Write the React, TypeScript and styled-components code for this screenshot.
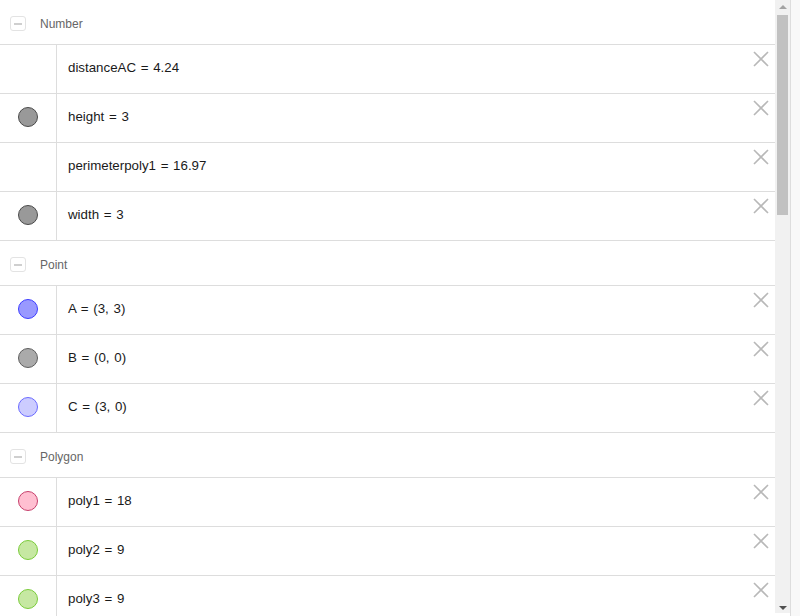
import React, { FunctionComponent } from "react";
import styled, { createGlobalStyle } from "styled-components";

/* Global */
const GlobalStyle = createGlobalStyle`
  html, body {
    margin: 0;
    padding: 0;
    background: #ffffff;
    overflow: hidden;
  }
  body {
    font-family: "Liberation Sans", Arial, sans-serif;
  }
`;

/* Styles */
const Page = styled.div`
  display: flex;
  width: 800px;
  height: 616px;
  background: #ffffff;
`;

const AlgebraList = styled.div`
  flex: 1;
  display: flex;
  flex-direction: column;
  overflow: hidden;
`;

const SectionHeader = styled.div`
  flex: none;
  height: 41px;
  padding-top: 3px;
  display: flex;
  align-items: center;
  padding-left: 10px;
  border-bottom: 1px solid #dddddd;
`;

const CollapseBox = styled.div`
  width: 14px;
  height: 13px;
  border: 1px solid #e3e3e3;
  border-radius: 3px;
  display: flex;
  justify-content: center;
  align-items: center;

  &::after {
    content: "";
    width: 8px;
    height: 2px;
    background: #cfcfcf;
  }
`;

const SectionTitle = styled.span`
  margin-left: 14px;
  font-size: 12px;
  color: #666666;
`;

const Row = styled.div`
  flex: none;
  height: 48px;
  display: flex;
  border-bottom: 1px solid #dddddd;
`;

const MarbleCell = styled.div`
  width: 56px;
  flex: none;
  border-right: 1px solid #dddddd;
  display: flex;
  justify-content: center;
  align-items: center;
  padding-bottom: 2px;
`;

const Marble = styled.div<{ $fill: string; $stroke: string }>`
  width: 18px;
  height: 18px;
  border-radius: 50%;
  background: ${(p) => p.$fill};
  border: 1px solid ${(p) => p.$stroke};
`;

const Definition = styled.div`
  flex: 1;
  display: flex;
  align-items: center;
  padding-left: 11px;
  padding-bottom: 4px;
  font-size: 13.3px;
  color: #1a1a1a;
  word-spacing: 1px;
`;

const DeleteButton = styled.div`
  align-self: flex-start;
  margin-top: 6px;
  margin-right: 6px;
  width: 16px;
  height: 16px;
  cursor: pointer;
`;

const Scrollbar = styled.div`
  width: 15px;
  height: 613px;
  flex: none;
  background: #f1f1f1;
  display: flex;
  flex-direction: column;
  align-items: center;
`;

const ArrowButton = styled.div<{ $down?: boolean }>`
  width: 15px;
  height: 15px;
  flex: none;
  display: flex;
  justify-content: center;
  align-items: center;
  margin-top: ${(p) => (p.$down ? "auto" : "0")};

  &::after {
    content: "";
    width: 0;
    height: 0;
    border-left: 4px solid transparent;
    border-right: 4px solid transparent;
    ${(p) =>
      p.$down
        ? "border-top: 4px solid #505050; margin-top: 4px;"
        : "border-bottom: 4px solid #a3a3a3; margin-bottom: 1px;"}
  }
`;

const Thumb = styled.div`
  width: 11px;
  height: 200px;
  background: #c1c1c1;
`;

const WindowEdge = styled.div`
  width: 9px;
  flex: none;
  border-left: 1px solid #dddddd;
  background: #f8f8f8;
`;

/* Data */

interface Item {
  text: string;
  marble?: { fill: string; stroke: string };
}

interface Section {
  title: string;
  items: Item[];
}

const gray = { fill: "#999999", stroke: "#4a4a4a" };
const green = { fill: "#c6e8a2", stroke: "#7acc3a" };

const sections: Section[] = [
  {
    title: "Number",
    items: [
      { text: "distanceAC = 4.24" },
      { text: "height = 3", marble: gray },
      { text: "perimeterpoly1 = 16.97" },
      { text: "width = 3", marble: gray },
    ],
  },
  {
    title: "Point",
    items: [
      { text: "A = (3, 3)", marble: { fill: "#9999ff", stroke: "#3d3dff" } },
      { text: "B = (0, 0)", marble: { fill: "#aaaaaa", stroke: "#5e5e5e" } },
      { text: "C = (3, 0)", marble: { fill: "#ccccff", stroke: "#6a6aff" } },
    ],
  },
  {
    title: "Polygon",
    items: [
      { text: "poly1 = 18", marble: { fill: "#ffbfd1", stroke: "#c7406c" } },
      { text: "poly2 = 9", marble: green },
      { text: "poly3 = 9", marble: green },
    ],
  },
];

const CloseIcon: FunctionComponent = () => (
  <svg width="16" height="16" viewBox="0 0 16 16">
    <path d="M1 1 L15 15 M15 1 L1 15" stroke="#b8b8b8" strokeWidth="1.6" fill="none" />
  </svg>
);

const App: FunctionComponent = () => {
  return (
    <Page>
      <GlobalStyle />
      <AlgebraList>
        {sections.map((section) => (
          <React.Fragment key={section.title}>
            <SectionHeader>
              <CollapseBox />
              <SectionTitle>{section.title}</SectionTitle>
            </SectionHeader>
            {section.items.map((item) => (
              <Row key={item.text}>
                <MarbleCell>
                  {item.marble && <Marble $fill={item.marble.fill} $stroke={item.marble.stroke} />}
                </MarbleCell>
                <Definition>{item.text}</Definition>
                <DeleteButton>
                  <CloseIcon />
                </DeleteButton>
              </Row>
            ))}
          </React.Fragment>
        ))}
      </AlgebraList>
      <Scrollbar>
        <ArrowButton />
        <Thumb />
        <ArrowButton $down />
      </Scrollbar>
      <WindowEdge />
    </Page>
  );
};

export default App;
